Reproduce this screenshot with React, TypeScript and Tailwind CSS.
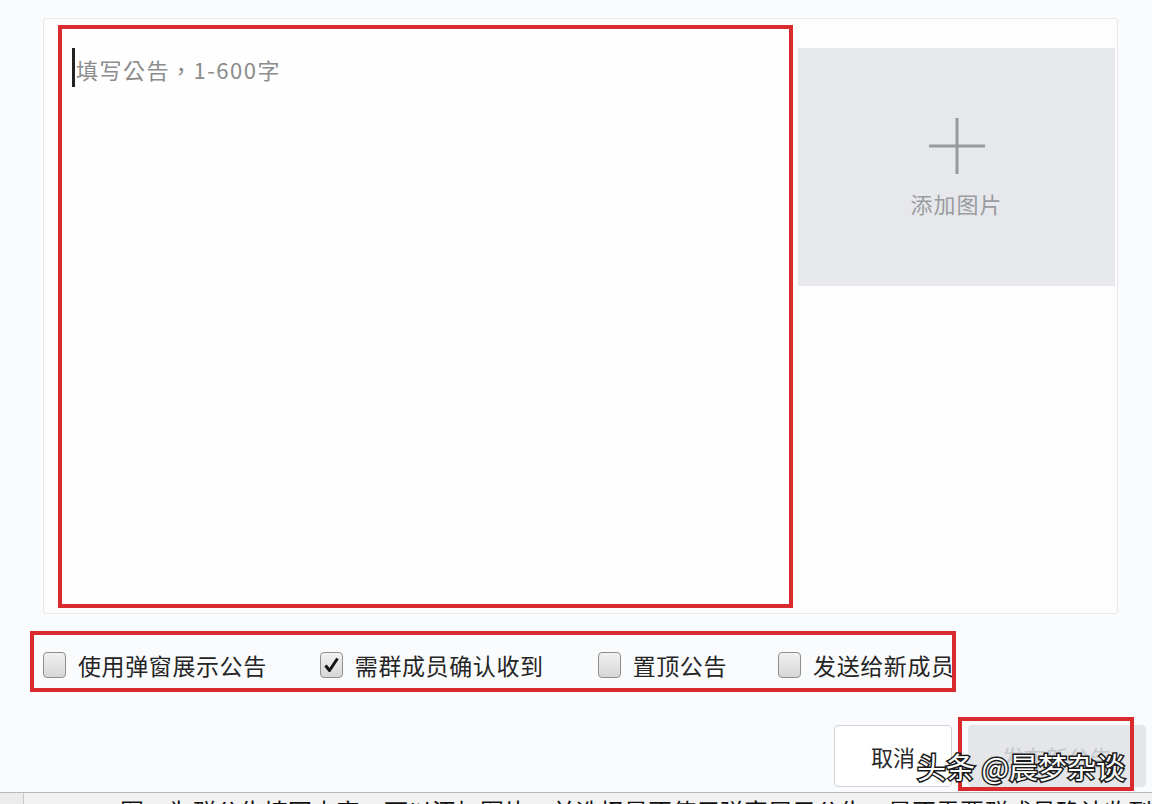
const font = '[font-family:"Noto_Sans_CJK_SC","Noto_Sans",sans-serif]';

const options = [
	{ label: '使用弹窗展示公告', checked: false, ml: 'ml-[9px]' },
	{ label: '需群成员确认收到', checked: true, ml: 'ml-[53px]' },
	{ label: '置顶公告', checked: false, ml: 'ml-[54px]' },
	{ label: '发送给新成员', checked: false, ml: 'ml-[51px]' },
];

function Checkbox({ checked }: { checked: boolean }) {
	return (
		<span className="flex h-[26px] w-[23px] shrink-0 items-center justify-center rounded-[4px] border border-[#8f8f8f] bg-gradient-to-b from-[#f2f2f2] to-[#d6d6d6]">
			{checked && (
				<svg width="17" height="18" viewBox="0 0 17 18">
					<path d="M2.5 9.5 L6.5 14.5 L14.5 2.5" fill="none" stroke="#141414" strokeWidth="3" strokeLinejoin="round" />
				</svg>
			)}
		</span>
	);
}

export default function App() {
	return (
		<div className={`relative flex h-[804px] w-[1152px] flex-col overflow-hidden bg-[#fafbfc] ${font}`}>
			{/* editor card */}
			<div className="ml-[43px] mt-[18px] flex h-[598px] w-[1075px] items-start rounded-[3px] border border-[#e6e9ec] bg-[#fdfdfe]">
				<div className="ml-[14px] mt-[6px] h-[583px] w-[735px] border-4 border-[#d92a2e] bg-[#fefefe]">
					<div className="ml-[10px] mt-[19px] flex h-[39px] items-center">
						<span className="h-[39px] w-[3px] bg-[#222]" />
						<span className='ml-[1px] mt-[4px] text-[22px] tracking-[1.5px] text-[#8c8c8c] [font-family:"Noto_Sans_CJK_TC","Noto_Sans",sans-serif]'>
							填写公告，1-600字
						</span>
					</div>
				</div>
				<div className="ml-[5px] mt-[29px] flex h-[238px] w-[317px] flex-col items-center bg-[#e6e8eb]">
					<svg className="mt-[69px]" width="58" height="58" viewBox="0 0 58 58">
						<path d="M29 1 V57 M1 29 H57" stroke="#979a9e" strokeWidth="3" />
					</svg>
					<span className="mt-[12px] text-[22px] tracking-[1px] text-[#9a9ca0]">添加图片</span>
				</div>
			</div>

			{/* options */}
			<div className="ml-[30px] mt-[17px] flex h-[61px] w-[926px] items-center overflow-hidden border-4 border-[#d92a2e] pt-[7px]">
				{options.map((o) => (
					<div key={o.label} className={`flex shrink-0 items-center ${o.ml}`}>
						<Checkbox checked={o.checked} />
						<span className="ml-[12px] whitespace-nowrap text-[23px] tracking-[0.6px] text-[#252525]">{o.label}</span>
					</div>
				))}
			</div>

			{/* buttons */}
			<div className="mt-[33px] flex h-[62px] items-stretch justify-end pr-[6px]">
				<button className="w-[118px] rounded-[4px] border border-[#cfd2d6] bg-white text-[22px] text-[#2a2a2a]">取消</button>
				<button className="ml-[16px] w-[178px] rounded-[4px] bg-[#e4e6e9] text-[22px] text-[#c4c7cb]">发布新公告</button>
			</div>

			{/* bottom strip of page */}
			<div className="mt-[5px] flex h-[12px] overflow-hidden border-t border-[#b9b9b9] bg-[#f2f2f2]">
				<div className="w-[284px] border-r border-[#c9c9c9] bg-[#ececec]" />
				<div className="ml-[96px] mt-[3px] whitespace-nowrap text-[24px] leading-[30px] text-[#111]">
					图：为群公告填写内容，可以添加图片，并选择是否使用弹窗展示公告，是否需要群成员确认收到
				</div>
			</div>

			{/* annotation box over publish button */}
			<div className="pointer-events-none absolute left-[958px] top-[717px] h-[74px] w-[176px] border-4 border-[#d92a2e]" />

			{/* watermark */}
			<div className="pointer-events-none absolute left-[917px] top-[746px] whitespace-nowrap text-[29px] leading-[40px] text-white [-webkit-text-stroke:3px_#1a1a1a] [paint-order:stroke_fill]">
				头条 @晨梦杂谈
			</div>
		</div>
	);
}
